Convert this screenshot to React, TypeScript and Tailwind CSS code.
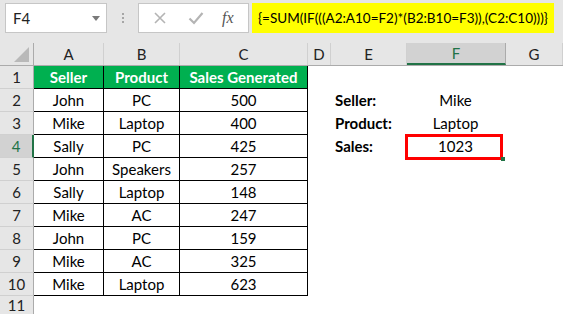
import React from "react";

const cols = [
  { key: "A", w: "w-[70px]" },
  { key: "B", w: "w-[76px]" },
  { key: "C", w: "w-[128px]" },
  { key: "D", w: "w-[23px]" },
  { key: "E", w: "w-[76px]" },
  { key: "F", w: "w-[99px]" },
  { key: "G", w: "flex-1" },
];

const data = [
  ["John", "PC", "500"],
  ["Mike", "Laptop", "400"],
  ["Sally", "PC", "425"],
  ["John", "Speakers", "257"],
  ["Sally", "Laptop", "148"],
  ["Mike", "AC", "247"],
  ["John", "PC", "159"],
  ["Mike", "AC", "325"],
  ["Mike", "Laptop", "623"],
];

const side: Record<number, [string, string]> = {
  2: ["Seller:", "Mike"],
  3: ["Product:", "Laptop"],
  4: ["Sales:", "1023"],
};

const FormulaBar = () => (
  <div className="h-[43px] flex items-start pt-[3px] pl-[5px] bg-[#e6e6e6]">
    <div className="w-[102px] h-[30px] bg-white border border-[#c6c6c6] flex items-center justify-between pl-[7px] pr-[6px] text-[15px] text-[#222]">
      <span>F4</span>
      <svg width="8" height="5" viewBox="0 0 8 5">
        <path d="M0 0 H8 L4 5 Z" fill="#7a7a7a" />
      </svg>
    </div>
    <div className="w-[31px] h-[30px] flex flex-col items-center justify-center gap-[2px]">
      <span className="w-[2px] h-[2px] bg-[#a6a6a6]" />
      <span className="w-[2px] h-[2px] bg-[#a6a6a6]" />
      <span className="w-[2px] h-[2px] bg-[#a6a6a6]" />
    </div>
    <div className="w-[111px] h-[30px] bg-white border border-[#c6c6c6] flex items-center pl-[14px]">
      <svg width="14" height="14" viewBox="0 0 14 14">
        <path d="M2 2 L12 12 M12 2 L2 12" stroke="#b4b4b4" strokeWidth="1.6" />
      </svg>
      <svg className="ml-[21px]" width="16" height="14" viewBox="0 0 16 14">
        <path d="M1.5 7.5 L6 12 L14.5 2" stroke="#b4b4b4" strokeWidth="2.2" fill="none" />
      </svg>
      <span className="ml-[18px] text-[16px] italic text-[#555] font-['Liberation_Serif',serif] leading-none">
        fx
      </span>
    </div>
    <div className="ml-[3px] w-[302px] h-[30px] bg-[#ffff00] flex items-center pl-[6px] text-[13.5px] text-black whitespace-nowrap overflow-hidden">
      {"{=SUM(IF(((A2:A10=F2)*(B2:B10=F3)),(C2:C10)))}"}
    </div>
  </div>
);

const HeaderRow = () => (
  <div className="flex h-[23px] bg-[#e6e6e6] border-b border-[#ababab]">
    <div className="w-[34px] border-r border-[#ababab] flex items-end justify-end pr-[4px] pb-[3px]">
      <svg width="15" height="15" viewBox="0 0 15 15">
        <path d="M15 0 V15 H0 Z" fill="#b9b9b9" />
      </svg>
    </div>
    {cols.map((c) =>
      c.key === "F" ? (
        <div
          key={c.key}
          className={`${c.w} bg-[#d2d2d2] border-r border-[#ababab] border-b-2 border-b-[#217346] flex items-center justify-center text-[15px] text-[#217346]`}
        >
          {c.key}
        </div>
      ) : (
        <div
          key={c.key}
          className={`${c.w} border-r border-[#d0d0d0] flex items-center justify-center text-[15px] text-[#222]`}
        >
          {c.key}
        </div>
      )
    )}
  </div>
);

const RowHeader = ({ n }: { n: number }) =>
  n === 4 ? (
    <div className="w-[34px] h-full bg-[#d2d2d2] border-r-2 border-[#217346] border-b border-b-[#d0d0d0] flex items-center justify-center text-[15px] text-[#217346]">
      {n}
    </div>
  ) : (
    <div className="w-[34px] h-full bg-[#e6e6e6] border-r border-[#ababab] border-b border-b-[#d0d0d0] flex items-center justify-center text-[15px] text-[#222]">
      {n}
    </div>
  );

export default function App() {
  return (
    <div className="w-[563px] h-[314px] overflow-hidden bg-white font-['Lato',sans-serif]">
      <FormulaBar />
      <HeaderRow />
      {/* row 1: green table header */}
      <div className="flex h-[23px]">
        <RowHeader n={1} />
        <div className="w-[70px] bg-[#00b050] border-r border-b border-black flex items-center justify-center text-[15px] font-bold text-white">
          Seller
        </div>
        <div className="w-[76px] bg-[#00b050] border-r border-b border-black flex items-center justify-center text-[15px] font-bold text-white">
          Product
        </div>
        <div className="w-[128px] bg-[#00b050] border-r border-b border-black flex items-center justify-center text-[15px] font-bold text-white whitespace-nowrap">
          Sales Generated
        </div>
      </div>
      {data.map((r, i) => {
        const n = i + 2;
        const s = side[n];
        return (
          <div key={n} className="flex h-[23px] text-[15px] text-black">
            <RowHeader n={n} />
            <div className="w-[70px] border-r border-b border-black flex items-center justify-center">
              {r[0]}
            </div>
            <div className="w-[76px] border-r border-b border-black flex items-center justify-center">
              {r[1]}
            </div>
            <div className="w-[128px] border-r border-b border-black flex items-center justify-center">
              {r[2]}
            </div>
            <div className="w-[22px]" />
            <div className="w-[76px] flex items-center pl-[5px] font-bold">
              {s ? s[0] : ""}
            </div>
            <div className="relative w-[99px] flex items-center justify-center">
              {s ? s[1] : ""}
              {n === 4 && (
                <>
                  <div className="absolute left-[-1px] top-[-1px] w-[98px] h-[26px] border-[3px] border-[#ff0000]" />
                  <div className="absolute left-[95px] top-[22px] w-[4px] h-[4px] bg-[#217346]" />
                </>
              )}
            </div>
          </div>
        );
      })}
      <div className="flex h-[18px] items-start">
        <div className="w-[34px] h-[18px] bg-[#e6e6e6] border-r border-[#ababab] flex items-start justify-center pt-[1px] text-[15px] leading-[17px] text-[#222]">
          11
        </div>
      </div>
    </div>
  );
}
